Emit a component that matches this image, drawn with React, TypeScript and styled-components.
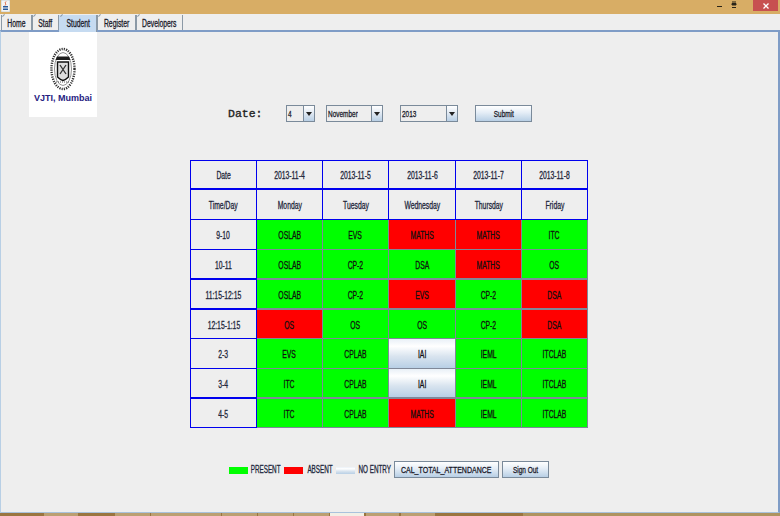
import React from "react";
import styled, { createGlobalStyle } from "styled-components";

const Global = createGlobalStyle`
  html, body { margin: 0; padding: 0; width: 780px; height: 516px; overflow: hidden; background: #eeeeee; }
  body { font-family: "Liberation Sans", Arial, sans-serif; color: #1a1a2a; }
  * { box-sizing: border-box; }
`;

const Window = styled.div`
  width: 780px; height: 516px; display: flex; flex-direction: column; background: #eeeeee;
`;
const TitleBar = styled.div`
  height: 14px; flex: none; background: #d8ad65; display: flex; align-items: flex-start; padding-left: 1px;
`;
const TitleSpacer = styled.div`flex: 1;`;
const WinGlyphs = styled.div`
  display: flex; align-items: flex-start;
`;
const CloseBtn = styled.div`
  width: 25px; height: 11px; background: #c75050; display: flex; align-items: center; justify-content: center; margin: 0 2px 0 6px;
`;
const TabBar = styled.div`
  height: 16px; flex: none; margin-top: 1px; display: flex; padding-left: 1px; position: relative; z-index: 1;
`;
const Tab = styled.div<{ $w: number; $active?: boolean }>`
  width: ${p => p.$w}px; height: ${p => (p.$active ? 17 : 15)}px;
  background: ${p => (p.$active ? "#c6dbf1" : "#eeeeee")};
  border-right: 1px solid #8b99a6; border-left: 1px solid ${p => (p.$active ? "#c6dbf1" : "#8b99a6")};
  display: flex; align-items: center; justify-content: center; padding-top: ${p => (p.$active ? 0 : 2)}px;
  font-size: 10px; overflow: visible; position: relative;
  &::before { content: ""; position: absolute; left: 0; top: 0; width: 3px; height: 1px; background: #8b99a6; transform: rotate(-45deg); }
`;
const Sq = styled.span<{ $s?: number }>`
  display: inline-block; white-space: nowrap; transform: scaleX(${p => p.$s ?? 0.68}); transform-origin: center;
  font-weight: 400; -webkit-text-stroke: 0.3px currentColor;
`;
const Panel = styled.div`
  flex: 1; min-height: 0; border-top: 2px solid #7f9cc6; border-left: 1px solid #b8cfe5; border-right: 2px solid #7f9cc6; border-bottom: 1px solid #a9c2dc;
  margin-top: -1px; display: flex; flex-direction: column; background: #eeeeee;
`;
const Top = styled.div`
  display: flex; align-items: flex-start; padding-left: 28px; height: 85px; flex: none;
`;
const Logo = styled.div`
  width: 68px; height: 85px; background: #ffffff; flex: none; display: flex; flex-direction: column; align-items: center; padding-top: 15px;
`;
const LogoText = styled.div`
  font-size: 9px; font-weight: 700; color: #26207f; margin-top: 2px; line-height: 10px; white-space: nowrap;
`;
const DateRow = styled.div`
  display: flex; align-items: center; margin: 73px 0 0 131px; height: 17px;
`;
const DateLabel = styled.div`
  font-family: "Liberation Mono", monospace; font-size: 11.5px; color: #222; width: 58px; -webkit-text-stroke: .35px #222;
`;
const Combo = styled.div<{ $w: number; $gap: number }>`
  width: ${p => p.$w}px; margin-right: ${p => p.$gap}px; height: 17px; border: 1px solid #7a8a9a; display: flex; background: #eeeeee; flex: none;
`;
const ComboValue = styled.div`
  flex: 1; font-size: 9.5px; display: flex; align-items: center; padding-left: 1px; overflow: hidden;
  & > span { transform-origin: left center; }
`;
const ComboArrow = styled.div`
  width: 11px; flex: none; border-left: 1px solid #7a8a9a; display: flex; align-items: center; justify-content: center;
  background: linear-gradient(#ffffff, #dfe8f2 50%, #b8cfe5);
  &::after { content: ""; border-left: 3.5px solid transparent; border-right: 3.5px solid transparent; border-top: 4px solid #222; }
`;
const Button = styled.div<{ $w: number; $h: number; $ml?: number }>`
  width: ${p => p.$w}px; height: ${p => p.$h}px; margin-left: ${p => p.$ml ?? 0}px; flex: none;
  border: 1px solid #7a8a9a; background: linear-gradient(#ffffff, #e4edf6 45%, #b8cfe5);
  display: flex; align-items: center; justify-content: center; font-size: 9.5px;
`;
const Table = styled.div`
  width: 398px; margin: 43px 0 0 189px; flex: none; display: grid;
  grid-template-columns: 66px 66px 66px 67px 66px 66px;
  grid-template-rows: 29px 30px 30px 30px 30px 29px 30px 30px 29px;
  border-top: 1px solid #0000ee; border-left: 1px solid #0000ee;
`;
const HeadCell = styled.div<{ $thick?: boolean }>`
  border-right: 1px solid #0000ee; border-bottom: ${p => (p.$thick ? 2 : 1)}px solid #0000ee;
  background: #eeeeee; display: flex; align-items: center; justify-content: center; padding-top: 2px; font-size: 10px;
  color: #22263a;
`;
const bg: Record<string, string> = {
  g: "#00ff00",
  r: "#ff0000",
  n: "linear-gradient(#e9f0f7, #ffffff 25%, #d9e4ef 60%, #b8cfe5)",
};
const SlotCell = styled.div<{ $k: string; $thick?: boolean }>`
  border-right: 1px solid #808898; border-bottom: ${p => (p.$thick ? 2 : 1)}px solid #808898;
  background: ${p => bg[p.$k]}; display: flex; align-items: center; justify-content: center; padding-top: 2px; font-size: 10px; color: #101010;
`;
const Legend = styled.div`
  display: flex; align-items: center; margin: 33px 0 0 228px; height: 17px;
`;
const Swatch = styled.div<{ $k: string }>`
  width: 19px; height: 7px; flex: none; background: ${p => bg[p.$k]}; margin-top: 1px;
`;
const LegendLabel = styled.div<{ $w: number }>`
  width: ${p => p.$w}px; flex: none; display: flex; justify-content: center; font-size: 10px; color: #20263c;
`;
const TaskBar = styled.div`
  height: 3px; flex: none; display: flex; background: #9a7540;
`;
const TaskTab = styled.div<{ $w: number; $ml: number; $on?: boolean }>`
  width: ${p => p.$w}px; margin-left: ${p => p.$ml}px; flex: none; background: ${p => (p.$on ? "#f2efe6" : "#bb9f72")};
`;
const TaskRest = styled.div`
  flex: 1; margin-left: 88px; background: #ae9360;
`;

const days = ["Monday", "Tuesday", "Wednesday", "Thursday", "Friday"];
const dates = ["2013-11-4", "2013-11-5", "2013-11-6", "2013-11-7", "2013-11-8"];
const rows: { t: string; thick?: boolean; c: [string, string][] }[] = [
  { t: "9-10", c: [["OSLAB", "g"], ["EVS", "g"], ["MATHS", "r"], ["MATHS", "r"], ["ITC", "g"]] },
  { t: "10-11", thick: true, c: [["OSLAB", "g"], ["CP-2", "g"], ["DSA", "g"], ["MATHS", "r"], ["OS", "g"]] },
  { t: "11:15-12:15", thick: true, c: [["OSLAB", "g"], ["CP-2", "g"], ["EVS", "r"], ["CP-2", "g"], ["DSA", "r"]] },
  { t: "12:15-1:15", c: [["OS", "r"], ["OS", "g"], ["OS", "g"], ["CP-2", "g"], ["DSA", "r"]] },
  { t: "2-3", c: [["EVS", "g"], ["CPLAB", "g"], ["IAI", "n"], ["IEML", "g"], ["ITCLAB", "g"]] },
  { t: "3-4", thick: true, c: [["ITC", "g"], ["CPLAB", "g"], ["IAI", "n"], ["IEML", "g"], ["ITCLAB", "g"]] },
  { t: "4-5", c: [["ITC", "g"], ["CPLAB", "g"], ["MATHS", "r"], ["IEML", "g"], ["ITCLAB", "g"]] },
];
const tabs: [string, number, boolean?][] = [
  ["Home", 31], ["Staff", 27], ["Student", 38, true], ["Register", 39], ["Developers", 47],
];
const task: [number, number, boolean?][] = [
  [34, 44], [35, 37], [35, 1], [35, 0], [35, 1], [35, 1], [35, 1], [34, 1, true], [33, 2], [34, 2],
];

function JavaIcon() {
  return (
    <svg width="9" height="12" viewBox="0 0 9 12">
      <rect x="0" y="0" width="9" height="12" fill="#f4f4f4" stroke="#9aa" strokeWidth="0.5" />
      <path d="M5 1.5C3 3 6 4 4 5.5" stroke="#d9552a" fill="none" />
      <path d="M2 6.5h5M2 8h5M2 9.5h5" stroke="#2a5a9a" />
    </svg>
  );
}
function Emblem() {
  return (
    <svg width="28" height="44" viewBox="0 0 28 44">
      <ellipse cx="14" cy="22" rx="11.5" ry="20" fill="none" stroke="#333" strokeWidth="2.400" strokeDasharray="1.2 1.1" />
      <ellipse cx="14" cy="22" rx="8.5" ry="16.5" fill="#fff" stroke="#666" strokeWidth="0.7" />
      <path d="M8 9.5h12l1.5 3.5h-15z" fill="#1c1c1c" />
      <path d="M8.5 15h11v15c-2 2-3.500 3-5.500 3.500c-2-.5-3.500-1.500-5.500-3.500z" fill="#ddd" stroke="#111" strokeWidth="1.4" />
      <path d="M11 18l6 9M17 18l-6 9" stroke="#333" strokeWidth="1.300" />
      <path d="M7 35h14" stroke="#555" strokeWidth="1" strokeDasharray="1 1" />
    </svg>
  );
}

export default function App() {
  return (
    <Window>
      <Global />
      <TitleBar>
        <JavaIcon />
        <TitleSpacer />
        <WinGlyphs>
          <svg width="30" height="11" viewBox="0 0 30 11">
            <path d="M0 6.500h5" stroke="#2a2418" strokeWidth="1" />
            <path d="M15 2h4M15 3.500h4v1.500h-4zM15 7.500h4" stroke="#2a2418" strokeWidth="1" fill="#2a2418" />
          </svg>
          <CloseBtn>
            <svg width="6" height="6" viewBox="0 0 6 6">
              <path d="M.5.5l5 5M5.500.5l-5 5" stroke="#fff" strokeWidth="1.300" />
            </svg>
          </CloseBtn>
        </WinGlyphs>
      </TitleBar>
      <TabBar>
        {tabs.map(([n, w, a]) => (
          <Tab key={n} $w={w} $active={a}><Sq>{n}</Sq></Tab>
        ))}
      </TabBar>
      <Panel>
        <Top>
          <Logo>
            <Emblem />
            <LogoText>VJTI, Mumbai</LogoText>
          </Logo>
          <DateRow>
            <DateLabel>Date:</DateLabel>
            <Combo $w={29} $gap={11}><ComboValue><Sq>4</Sq></ComboValue><ComboArrow /></Combo>
            <Combo $w={57} $gap={17}><ComboValue><Sq>November</Sq></ComboValue><ComboArrow /></Combo>
            <Combo $w={58} $gap={17}><ComboValue><Sq>2013</Sq></ComboValue><ComboArrow /></Combo>
            <Button $w={57} $h={17}><Sq>Submit</Sq></Button>
          </DateRow>
        </Top>
        <Table>
          <HeadCell $thick><Sq>Date</Sq></HeadCell>
          {dates.map(d => <HeadCell key={d} $thick><Sq>{d}</Sq></HeadCell>)}
          <HeadCell><Sq>Time/Day</Sq></HeadCell>
          {days.map(d => <HeadCell key={d}><Sq>{d}</Sq></HeadCell>)}
          {rows.map(r => (
            <React.Fragment key={r.t}>
              <HeadCell $thick={r.thick}><Sq>{r.t}</Sq></HeadCell>
              {r.c.map(([s, k], i) => (
                <SlotCell key={i} $k={k} $thick={r.thick}><Sq>{s}</Sq></SlotCell>
              ))}
            </React.Fragment>
          ))}
        </Table>
        <Legend>
          <Swatch $k="g" />
          <LegendLabel $w={36}><Sq $s={0.63}>PRESENT</Sq></LegendLabel>
          <Swatch $k="r" />
          <LegendLabel $w={33}><Sq $s={0.63}>ABSENT</Sq></LegendLabel>
          <Swatch $k="n" />
          <LegendLabel $w={39}><Sq $s={0.63}>NO ENTRY</Sq></LegendLabel>
          <Button $w={105} $h={17}><Sq $s={0.74}>CAL_TOTAL_ATTENDANCE</Sq></Button>
          <Button $w={47} $h={17} $ml={3}><Sq>Sign Out</Sq></Button>
        </Legend>
      </Panel>
      <TaskBar>
        {task.map(([w, m, on], i) => <TaskTab key={i} $w={w} $ml={m} $on={on} />)}
        <TaskRest />
      </TaskBar>
    </Window>
  );
}
